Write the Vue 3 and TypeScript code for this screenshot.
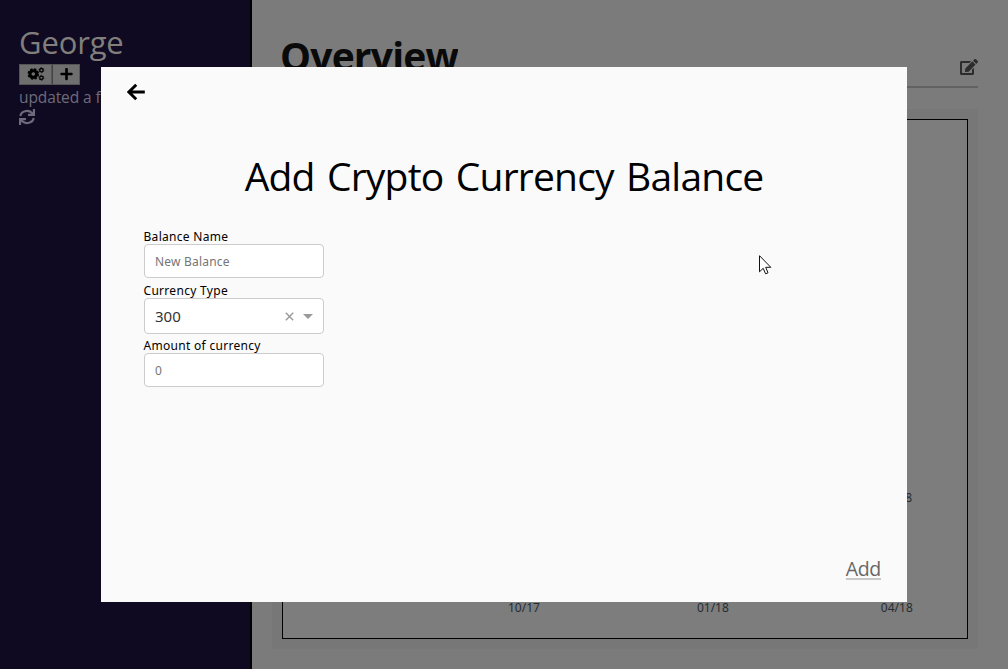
<script setup lang="ts">
import { ref } from 'vue'

const balanceName = ref('')
const amount = ref('')
const ticks: string[] = ['10/17', '01/18', '04/18']
</script>

<template>
  <div class="app">
    <aside class="sidebar">
      <div class="user"><span>George</span></div>
      <div class="tools">
        <button class="tool settings" aria-label="Settings">
          <svg width="18" height="14" viewBox="0 0 18 14">
            <circle cx="6.3" cy="7" r="3.3" fill="none" stroke="#000" stroke-width="3" />
            <circle cx="6.3" cy="7" r="4.9" fill="none" stroke="#000" stroke-width="1.7" stroke-dasharray="2.4 1.45" />
            <g fill="none" stroke="#000">
              <circle cx="14.4" cy="3.2" r="1.7" stroke-width="1.3" />
              <circle cx="14.4" cy="3.2" r="2.5" stroke-width="0.8" stroke-dasharray="1.3 1.32" />
              <circle cx="14.4" cy="10.8" r="1.7" stroke-width="1.3" />
              <circle cx="14.4" cy="10.8" r="2.5" stroke-width="0.8" stroke-dasharray="1.3 1.32" />
            </g>
          </svg>
        </button>
        <button class="tool plus" aria-label="Add">
          <svg width="13" height="14" viewBox="0 0 448 512"><path d="M416 208H272V64c0-17.67-14.33-32-32-32h-32c-17.67 0-32 14.33-32 32v144H32c-17.67 0-32 14.33-32 32v32c0 17.67 14.33 32 32 32h144v144c0 17.67 14.33 32 32 32h32c17.67 0 32-14.33 32-32V304h144c17.67 0 32-14.33 32-32v-32c0-17.67-14.33-32-32-32z" /></svg>
        </button>
      </div>
      <div class="updated">updated a few seconds ago</div>
      <svg class="refresh" width="16" height="16" viewBox="0 0 16 16">
        <g fill="none" stroke="#6e6a7b" stroke-width="2.2">
          <path d="M1.3 7A6.7 5.9 0 0 1 13 4" />
          <path d="M14.7 9A6.7 5.9 0 0 1 3 12" />
        </g>
        <path fill="#6e6a7b" d="M16 0V7H9V4.8H11.6L13.9 2.6V0ZM0 16V9H7V11.2H4.4L2.1 13.4V16Z" />
      </svg>
    </aside>
    <main class="main">
      <header class="head">
        <h1><span>Overview</span></h1>
        <svg class="edit" width="18" height="16" viewBox="0 0 576 512"><path fill="#2c2c2c" d="M402.6 83.2l90.2 90.2c3.8 3.8 3.8 10 0 13.8L274.4 405.6l-92.8 10.3c-12.4 1.4-22.9-9.1-21.5-21.5l10.3-92.8L388.8 83.2c3.8-3.8 10-3.8 13.8 0zm162-22.9l-48.8-48.8c-15.2-15.2-39.9-15.2-55.2 0l-35.4 35.4c-3.8 3.8-3.8 10 0 13.8l90.2 90.2c3.8 3.8 10 3.8 13.8 0l35.4-35.4c15.2-15.3 15.2-40 0-55.2zM384 346.2V448H64V128h229.8c3.2 0 6.2-1.3 8.5-3.5l40-40c7.6-7.6 2.2-20.5-8.5-20.5H48C21.5 64 0 85.5 0 112v352c0 26.5 21.5 48 48 48h352c26.5 0 48-21.5 48-48V306.2c0-10.7-12.9-16-20.5-8.5l-40 40c-2.2 2.3-3.5 5.3-3.5 8.5z" /></svg>
      </header>
      <section class="panel">
        <div class="chart">
          <div class="axis upper"><span>04/18</span></div>
          <div class="axis lower"><span v-for="t in ticks" :key="t">{{ t }}</span></div>
        </div>
      </section>
    </main>

    <div class="modal">
      <button class="back" aria-label="Back">
        <svg width="18" height="20" viewBox="0 0 18 20"><path d="M9.2 2.8L1.9 10L9.2 17.2M2 10H17.8" fill="none" stroke="#000" stroke-width="2.9" /></svg>
      </button>
      <h2>Add Crypto Currency Balance</h2>
      <form class="form" @submit.prevent>
        <label class="l1">Balance Name</label>
        <input v-model="balanceName" placeholder="New Balance">
        <label class="l2">Currency Type</label>
        <div class="select">
          <span class="value">300</span>
          <svg width="9" height="9" viewBox="0 0 9 9"><path d="M0.8 0.8L8.2 8.2M8.2 0.8L0.8 8.2" stroke="#999" stroke-width="1.4" /></svg>
          <i class="caret"></i>
        </div>
        <label class="l3">Amount of currency</label>
        <input v-model="amount" class="num" placeholder="0">
      </form>
      <a class="add">Add</a>
    </div>

    <svg class="cursor" width="13" height="20" viewBox="0 0 13 20"><path d="M.5.7V16.8L4.2 13.3L6.6 18.8L9 17.8L6.7 12.3H11.8Z" fill="#fff" stroke="#111" stroke-width="1" /></svg>
  </div>
</template>

<style>
html, body { margin: 0; overflow: hidden; }
</style>

<style scoped>
* { box-sizing: border-box; }
.app { position: relative; display: flex; width: 1008px; height: 669px; overflow: hidden; background: #7b7b7b; font-family: "Noto Sans", "Open Sans", sans-serif; color: #000; }
button { padding: 0; margin: 0; border: 0; }
svg { display: block; flex: none; }
.sidebar { width: 252px; height: 669px; padding: 21px 0 0 19px; background: #0f0a21; border-right: 2px solid #000; white-space: nowrap; overflow: hidden; }
.user { height: 43px; line-height: 43px; font-family: "Open Sans", sans-serif; font-size: 31px; color: #817f7c; letter-spacing: -0.15px; }
.tools { display: flex; height: 21px; }
.tool { display: flex; align-items: center; justify-content: center; height: 21px; background: #6f6f6f; border: 1px solid #555; }
.settings { width: 33px; padding-bottom: 1px; }
.plus { width: 28px; border-left: 1px solid #444; padding: 0 0 1px 0; }
.updated { height: 24px; line-height: 24px; font-family: "Open Sans", sans-serif; font-size: 15.5px; letter-spacing: -0.1px; color: #6e6a7b; }
.main { width: 756px; padding: 0 30px 0 20px; }
.head { display: flex; justify-content: space-between; width: 698px; height: 88px; margin-left: 8px; border-bottom: 2px solid #626262; }
h1 { margin: 0; font-family: "Open Sans", sans-serif; font-size: 39px; line-height: 54px; padding-top: 29px; font-weight: 700; letter-spacing: -0.8px; color: #0a0a0a; height: 86px; overflow: hidden; }
.edit { margin-top: 59px; }
.panel { width: 706px; height: 540px; margin-top: 21px; padding: 10px; background: #777; }
.chart { display: flex; flex-direction: column; width: 686px; height: 520px; border: 1px solid #000; background: #7d7d7d; padding-top: 370px; font-size: 12px; line-height: 16px; color: #252d32; }
.axis { display: flex; }
.upper { justify-content: flex-end; padding-right: 55px; height: 110px; }
.lower { gap: 157px; padding-left: 225px; }
.lower span:last-child { margin-left: -5px; }
.modal { position: absolute; left: 101px; top: 67px; width: 806px; height: 535px; padding: 15px 26px 0; background: #fafafa; display: flex; flex-direction: column; }
.back { width: 18px; height: 20px; background: none; }
h2 { margin: 46px -26px 0; height: 56px; line-height: 56px; font-family: "Open Sans", sans-serif; font-size: 39px; font-weight: 400; text-align: center; white-space: nowrap; letter-spacing: -0.8px; word-spacing: 3px; }
.form { width: 180px; margin: 24px 0 0 17px; display: flex; flex-direction: column; }
label { height: 16px; line-height: 18px; font-size: 12px; white-space: nowrap; letter-spacing: 0.3px; margin-left: -0.5px; }
.l2 { margin-top: 4px; }
.l3 { margin-top: 3px; }
input { width: 180px; height: 34px; padding: 0 10px; margin: 0; border: 1px solid #ccc; border-radius: 4px; background: #fff; font: 12px "Noto Sans", sans-serif; letter-spacing: 0.2px; outline: 0; }
input::placeholder { color: #757575; opacity: 1; }
.select { display: flex; align-items: center; width: 180px; height: 36px; padding: 0 10px; border: 1px solid #ccc; border-radius: 4px; background: #fff; }
.value { flex: 1; font-size: 15px; color: #333; }
.caret { margin-left: 9px; border: 5px solid transparent; border-top-color: #999; border-bottom: 0; }
.add { align-self: flex-end; margin-top: auto; margin-bottom: 22px; height: 24px; line-height: 25px; font-family: "Open Sans", sans-serif; font-size: 19.5px; letter-spacing: -0.3px; color: #666; border-bottom: 2px solid #c8c8c8; }
.cursor { position: absolute; left: 759px; top: 255px; }
</style>
